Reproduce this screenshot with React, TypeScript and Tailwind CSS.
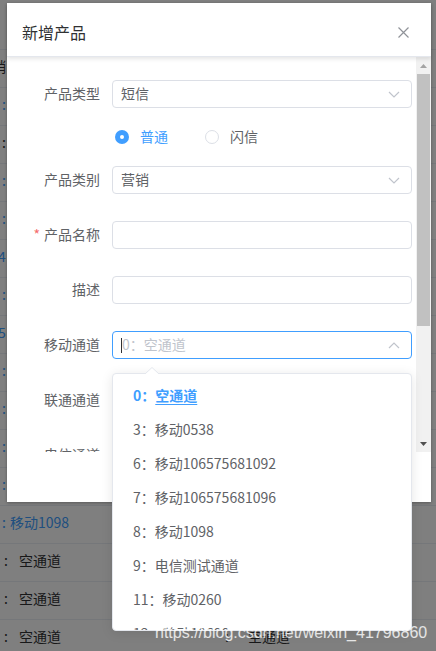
import React from "react";

const font = { fontFamily: '"Noto Sans CJK SC", "Noto Sans", sans-serif' };

function ChevronIcon({ up = false }: { up?: boolean }) {
  return (
    <svg width="12" height="7" viewBox="0 0 12 7" fill="none" className="shrink-0">
      <path
        d={up ? "M1 6L6 1L11 6" : "M1 1L6 6L11 1"}
        stroke="#c0c4cc"
        strokeWidth="1.2"
      />
    </svg>
  );
}

const bgRows: { a: React.ReactNode; b?: React.ReactNode }[] = [
  { a: null },
  { a: <span className="ml-[-22px] text-[#303133]">营销</span> },
  { a: <span className="pl-[2px] text-[#409eff]">:</span> },
  { a: <span className="pl-[2px] text-[#303133]">:</span> },
  { a: <span className="pl-[2px] text-[#409eff]">:</span> },
  { a: <span className="pl-[2px] text-[#409eff]">:</span> },
  { a: <span className="ml-[-2px] text-[#409eff]">4</span> },
  { a: <span className="pl-[2px] text-[#409eff]">:</span> },
  { a: <span className="ml-[-2px] text-[#409eff]">5</span> },
  { a: <span className="pl-[2px] text-[#409eff]">:</span> },
  { a: <span className="pl-[2px] text-[#409eff]">:</span> },
  { a: <span className="pl-[2px] text-[#409eff]">:</span> },
  { a: <span className="pl-[2px] text-[#409eff]">:</span> },
  {
    a: (
      <span className="pl-[2px] text-[#409eff]">
        :<span className="ml-[4px]">移动1098</span>
      </span>
    ),
  },
  {
    a: (
      <span className="pl-[4px] text-[#303133]">
        :<span className="ml-[11px]">空通道</span>
      </span>
    ),
  },
  {
    a: (
      <span className="pl-[4px] text-[#303133]">
        :<span className="ml-[11px]">空通道</span>
      </span>
    ),
  },
  {
    a: (
      <span className="pl-[4px] text-[#303133]">
        :<span className="ml-[11px]">空通道</span>
      </span>
    ),
    b: (
      <span className="text-[#303133]">
        :<span className="ml-[19px]">空通道</span>
      </span>
    ),
  },
];

const options = [
  "3：移动0538",
  "6：移动106575681092",
  "7：移动106575681096",
  "8：移动1098",
  "9：电信测试通道",
  "11：移动0260",
  "12：移动10690",
];

function FormRow({
  label,
  required,
  children,
  className = "mb-[27px]",
}: {
  label: string;
  required?: boolean;
  children?: React.ReactNode;
  className?: string;
}) {
  return (
    <div className={`flex items-center h-[28px] ${className}`}>
      <div className="w-[105px] pr-[12px] pb-[2px] text-right text-[14px] leading-none text-[#606266] shrink-0">
        {required && <span className="text-[#f56c6c] mr-[4px]">*</span>}
        {label}
      </div>
      {children}
    </div>
  );
}

function SelectBox({ value }: { value: string }) {
  return (
    <div className="w-[300px] h-[28px] border border-[#dcdfe6] rounded-[4px] flex items-center justify-between pl-[8px] pr-[11px] text-[14px] text-[#606266]">
      <span className="leading-none pb-[2px]">{value}</span>
      <ChevronIcon />
    </div>
  );
}

function InputBox() {
  return <div className="w-[300px] h-[28px] border border-[#dcdfe6] rounded-[4px] bg-white" />;
}

export default function App() {
  return (
    <div className="relative w-[436px] h-[651px] overflow-hidden bg-white" style={font}>
      {/* page behind the dialog */}
      <div className="flex flex-col pt-[12px]">
        {bgRows.map((r, i) => (
          <div
            key={i}
            className="flex items-center h-[38px] pb-[6px] border-b border-[#ebeef5] text-[14px] leading-none shrink-0"
          >
            <div className="w-[225px] shrink-0 flex">{r.a}</div>
            <div className="flex">{r.b}</div>
          </div>
        ))}
      </div>

      <div className="absolute inset-0 bg-black/50" />

      {/* dialog */}
      <div className="absolute left-[7px] top-[3px] w-[424px] bg-white shadow-[0_1px_3px_rgba(0,0,0,0.3)] flex flex-col">
        <div className="relative z-10 h-[54px] flex items-center justify-between pl-[15px] pr-[22px] pt-[4px] shadow-[0_2px_4px_rgba(0,0,0,0.1)] border-b border-[#e4e7ed]">
          <span className="text-[16px] leading-none text-[#303133]">新增产品</span>
          <svg width="11" height="11" viewBox="0 0 11 11" className="mt-[2px]">
            <path d="M0.5 0.5L10.5 10.5M10.5 0.5L0.5 10.5" stroke="#909399" strokeWidth="1.2" />
          </svg>
        </div>

        <div className="flex h-[395px]">
          <div className="flex-1 overflow-hidden pt-[23px]">
            <FormRow label="产品类型" className="mb-[19px]">
              <SelectBox value="短信" />
            </FormRow>

            <div className="flex items-center h-[20px] mb-[19px] pl-[108px] text-[14px] leading-none">
              <span className="w-[14px] h-[14px] rounded-full bg-[#409eff] flex items-center justify-center">
                <span className="w-[4px] h-[4px] rounded-full bg-white" />
              </span>
              <span className="ml-[11px] pb-[2px] text-[#409eff]">普通</span>
              <span className="ml-[37px] w-[14px] h-[14px] rounded-full border border-[#dcdfe6] bg-white" />
              <span className="ml-[11px] pb-[2px] text-[#606266]">闪信</span>
            </div>

            <FormRow label="产品类别">
              <SelectBox value="营销" />
            </FormRow>
            <FormRow label="产品名称" required>
              <InputBox />
            </FormRow>
            <FormRow label="描述">
              <InputBox />
            </FormRow>
            <FormRow label="移动通道">
              <div className="w-[300px] h-[28px] border border-[#409eff] rounded-[4px] flex items-center justify-between pl-[8px] pr-[11px] text-[14px]">
                <span className="flex items-center leading-none text-[#c0c4cc]">
                  <span className="w-[1px] h-[15px] bg-[#303133]" />
                  <span className="pb-[2px]">0：空通道</span>
                </span>
                <ChevronIcon up />
              </div>
            </FormRow>
            <FormRow label="联通通道" />
            <FormRow label="电信通道" />
          </div>

          {/* scrollbar */}
          <div className="w-[15px] bg-[#f1f1f1] flex flex-col shrink-0">
            <div className="h-[17px] flex items-center justify-center">
              <svg width="7" height="4" viewBox="0 0 7 4">
                <path d="M0 4L3.5 0L7 4Z" fill="#a3a3a3" />
              </svg>
            </div>
            <div className="h-[252px] mx-[1px] bg-[#c1c1c1]" />
            <div className="flex-1" />
            <div className="h-[17px] flex items-center justify-center">
              <svg width="7" height="4" viewBox="0 0 7 4">
                <path d="M0 0L3.5 4L7 0Z" fill="#505050" />
              </svg>
            </div>
          </div>
        </div>

        <div className="h-[50px] bg-white" />
      </div>

      {/* select dropdown */}
      <div className="absolute left-[112px] top-[373px] w-[300px] h-[258px]">
        <svg
          width="14"
          height="7"
          viewBox="0 0 14 7"
          className="absolute -top-[6px] left-[33px] z-10"
        >
          <path d="M0 7L7 0.5L14 7" fill="#ffffff" stroke="#e4e7ed" strokeWidth="1" />
        </svg>
        <div className="w-full h-full bg-white border border-[#e4e7ed] rounded-[4px] shadow-[0_2px_12px_rgba(0,0,0,0.1)] overflow-hidden">
          <ul className="pt-[5px]">
            <li className="h-[34px] flex items-center px-[20px] pb-[2px] text-[14px] leading-none text-[#409eff] font-bold">
              0：<span className="underline underline-offset-[3px]">空通道</span>
            </li>
            {options.map((o) => (
              <li
                key={o}
                className="h-[34px] flex items-center px-[20px] pb-[2px] text-[14px] leading-none text-[#606266]"
              >
                {o}
              </li>
            ))}
          </ul>
        </div>
      </div>

      {/* watermark */}
      <div
        className="absolute left-[155px] top-[623px] text-[16px] leading-[20px] text-white/80 whitespace-nowrap"
        style={{ fontFamily: '"Liberation Sans", Arial, sans-serif' }}
      >
        https://blog.csdn.net/weixin_41796860
      </div>
    </div>
  );
}
